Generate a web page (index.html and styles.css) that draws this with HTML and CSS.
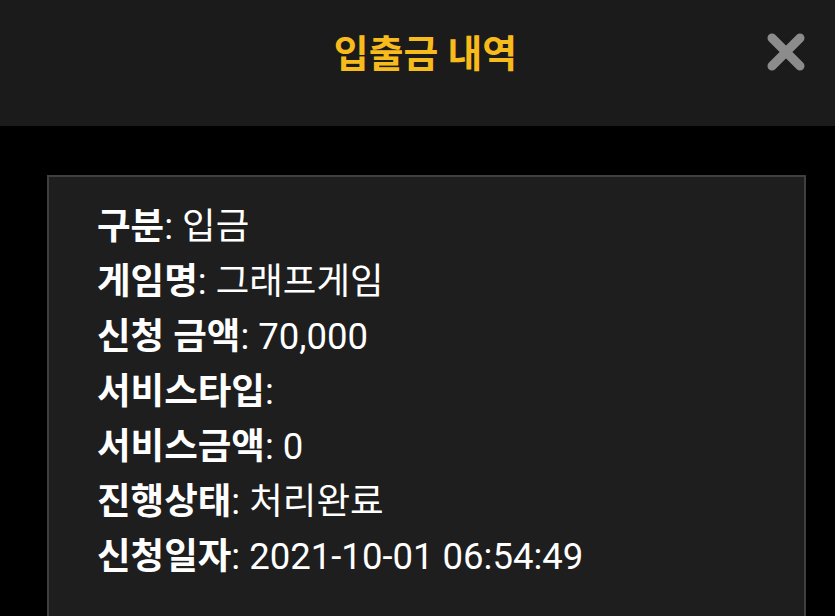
FILE: index.html
```html
<!DOCTYPE html>
<html lang="ko">
<head>
    <meta charset="UTF-8">
    <meta name="viewport" content="width=device-width, initial-scale=1.0">
    <title>입출금 내역</title>
    <link rel="stylesheet" href="styles.css">
</head>
<body>
    <div class="header">
        <h1 class="title">입출금 내역</h1>
        <button class="close" aria-label="닫기">
            <svg width="40" height="40" viewBox="0 0 40 40">
                <path d="M6 6 L34 34 M34 6 L6 34" stroke="#8c8c8c" stroke-width="9" stroke-linecap="round"/>
            </svg>
        </button>
    </div>

    <div class="card">
        <div class="row"><b>구분</b>: 입금</div>
        <div class="row"><b>게임명</b>: 그래프게임</div>
        <div class="row"><b>신청 금액</b>: 70,000</div>
        <div class="row"><b>서비스타입</b>:</div>
        <div class="row"><b>서비스금액</b>: 0</div>
        <div class="row"><b>진행상태</b>: 처리완료</div>
        <div class="row"><b>신청일자</b>: 2021-10-01 06:54:49</div>
    </div>
</body>
</html>
```

FILE: styles.css
```css
body {
    font-family: Roboto, "Noto Sans CJK KR", sans-serif;
    background-color: #000;
    color: white;
    margin: 0;
    height: 100vh;
    overflow: hidden;
}

.header {
    background-color: #1b1b1b;
    height: 126px;
    display: flex;
    align-items: center;
    justify-content: center;
    position: relative;
}

.title {
    margin: 0 0 26px 16px;
    font-size: 37.8px;
    font-weight: bold;
    color: #f8bb1c;
}

.close {
    position: absolute;
    right: 29px;
    top: 32px;
    background: none;
    border: none;
    padding: 0;
    cursor: pointer;
}

.close svg {
    display: block;
}

.card {
    box-sizing: border-box;
    background-color: #1e1e1e;
    border: 2px solid #3f3f3f;
    border-bottom: none;
    margin: 49px 29px 0 47px;
    padding: 22px 48px 0 48px;
    height: 441px;
}

.row {
    font-size: 36.5px;
    line-height: 55px;
}

.row b {
    font-weight: bold;
}
```
